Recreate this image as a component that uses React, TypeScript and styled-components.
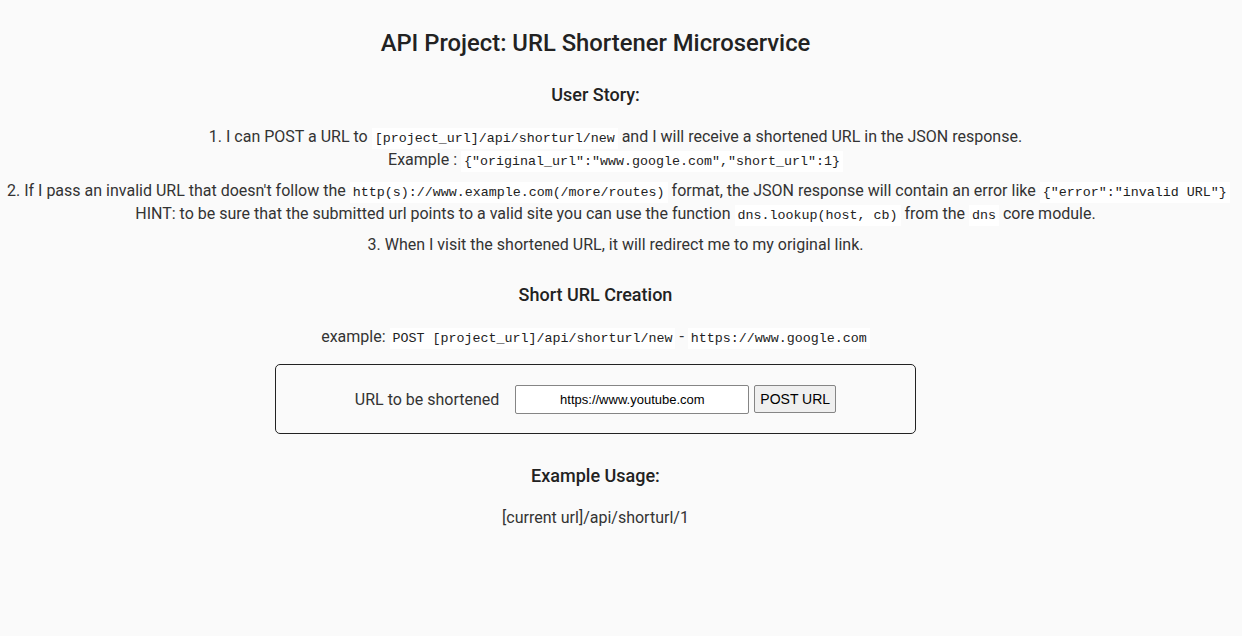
import React, { useState } from 'react';
import styled, { createGlobalStyle } from 'styled-components';

const GlobalStyle = createGlobalStyle`
  html, body {
    margin: 0;
    padding: 0;
    background-color: #fafafa;
  }
  body {
    font-family: Roboto, "Liberation Sans", Arial, sans-serif;
    color: #333;
  }
`;

const Page = styled.div`
  width: 1175px;
  margin-left: 8px;
  text-align: center;
`;

const Title = styled.h1`
  margin: 29px 0 0;
  font-size: 23.8px;
  line-height: 28px;
  font-weight: 500;
  color: #222;
`;

const SectionTitle = styled.h3<{ $top: number }>`
  margin: ${(p) => p.$top}px 0 0;
  font-size: 18px;
  line-height: 22px;
  font-weight: 500;
  color: #222;
`;

const StoryList = styled.ul`
  list-style: none;
  margin: 18.5px 0 0;
  padding-left: 40px;
`;

const StoryItem = styled.li<{ $wide?: boolean }>`
  font-size: 16px;
  line-height: 23px;
  margin-top: 8px;
  &:first-child {
    margin-top: 0;
  }
  ${(p) => (p.$wide ? 'margin-left: -41px; margin-right: -41px; white-space: nowrap;' : '')}
`;

const Code = styled.code`
  font-family: "Liberation Mono", "Courier New", monospace;
  font-size: 13.33px;
  line-height: 1;
  background-color: #fff;
  padding: 3px 3px;
  color: #222;
`;

const Text = styled.p<{ $top: number }>`
  margin: ${(p) => p.$top}px 0 0;
  font-size: 16px;
  line-height: 23px;
`;

const FormBox = styled.form`
  box-sizing: border-box;
  width: 641px;
  height: 70px;
  margin: 16.5px auto 0;
  border: 1px solid #222;
  border-radius: 5px;
  display: flex;
  align-items: center;
  justify-content: center;
`;

const Label = styled.label`
  font-size: 16px;
  margin-right: 16px;
`;

const UrlInput = styled.input`
  box-sizing: border-box;
  width: 234px;
  height: 29px;
  border: 1px solid #858585;
  border-radius: 2px;
  background: #fff;
  text-align: center;
  font-family: "Liberation Sans", Arial, sans-serif;
  font-size: 13px;
  color: #000;
  padding: 1px 2px;
`;

const SubmitButton = styled.button`
  box-sizing: border-box;
  height: 28px;
  margin-left: 5px;
  border: 1px solid #858585;
  border-radius: 2px;
  background: #efefef;
  font-family: "Liberation Sans", Arial, sans-serif;
  font-size: 14px;
  color: #000;
  padding: 1px 5px;
  white-space: nowrap;
`;

export default function App() {
  const [url, setUrl] = useState('https://www.youtube.com');

  return (
    <>
      <GlobalStyle />
      <Page>
        <Title>API Project: URL Shortener Microservice</Title>
        <SectionTitle $top={27}>User Story:</SectionTitle>
        <StoryList>
          <StoryItem>
            1. I can POST a URL to <Code>[project_url]/api/shorturl/new</Code> and I will receive a
            shortened URL in the JSON response.
            <br />
            Example : <Code>{'{"original_url":"www.google.com","short_url":1}'}</Code>
          </StoryItem>
          <StoryItem $wide>
            2. If I pass an invalid URL that doesn't follow the{' '}
            <Code>http(s)://www.example.com(/more/routes)</Code> format, the JSON response will contain an
            error like <Code>{'{"error":"invalid URL"}'}</Code>
            <br />
            HINT: to be sure that the submitted url points to a valid site you can use the function{' '}
            <Code>dns.lookup(host, cb)</Code> from the <Code>dns</Code> core module.
          </StoryItem>
          <StoryItem>3. When I visit the shortened URL, it will redirect me to my original link.</StoryItem>
        </StoryList>

        <SectionTitle $top={28.5}>Short URL Creation</SectionTitle>
        <Text $top={18.5}>
          example: <Code>POST [project_url]/api/shorturl/new</Code> - <Code>https://www.google.com</Code>
        </Text>
        <FormBox onSubmit={(e) => e.preventDefault()}>
          <Label htmlFor="url_input">URL to be shortened</Label>
          <UrlInput id="url_input" type="text" value={url} onChange={(e) => setUrl(e.target.value)} />
          <SubmitButton type="submit">POST URL</SubmitButton>
        </FormBox>

        <SectionTitle $top={31}>Example Usage:</SectionTitle>
        <Text $top={18.5}>[current url]/api/shorturl/1</Text>
      </Page>
    </>
  );
}
